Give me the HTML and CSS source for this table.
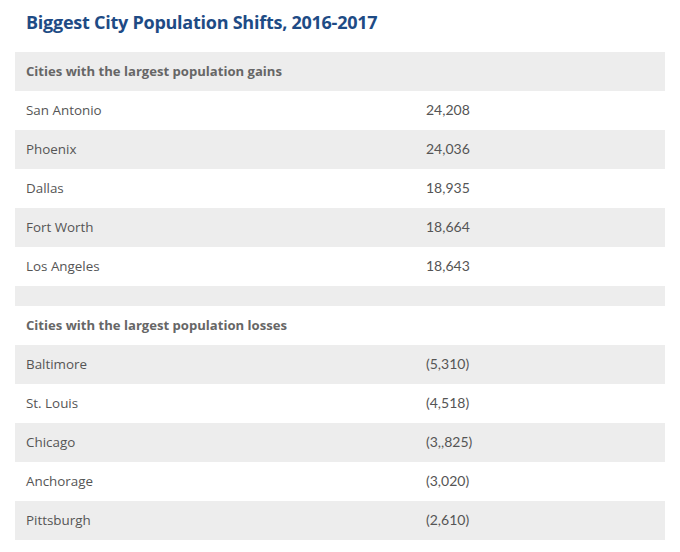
FILE: index.html
```html
<!DOCTYPE html>
<html>
<head>
<meta charset="utf-8">
<link rel="stylesheet" href="styles.css">
</head>
<body>
<div class="wrap">
  <h1 class="title">Biggest City Population Shifts, 2016-2017</h1>
  <table class="shifts">
    <tbody>
      <tr class="head"><td colspan="2">Cities with the largest population gains</td></tr>
      <tr><td class="city">San Antonio</td><td class="num">24,208</td></tr>
      <tr><td class="city">Phoenix</td><td class="num">24,036</td></tr>
      <tr><td class="city">Dallas</td><td class="num">18,935</td></tr>
      <tr><td class="city">Fort Worth</td><td class="num">18,664</td></tr>
      <tr><td class="city">Los Angeles</td><td class="num">18,643</td></tr>
      <tr class="spacer"><td colspan="2"></td></tr>
      <tr class="head"><td colspan="2">Cities with the largest population losses</td></tr>
      <tr><td class="city">Baltimore</td><td class="num">(5,310)</td></tr>
      <tr><td class="city">St. Louis</td><td class="num">(4,518)</td></tr>
      <tr><td class="city">Chicago</td><td class="num">(3,,825)</td></tr>
      <tr><td class="city">Anchorage</td><td class="num">(3,020)</td></tr>
      <tr><td class="city">Pittsburgh</td><td class="num">(2,610)</td></tr>
    </tbody>
  </table>
</div>
</body>
</html>
```
FILE: styles.css
```css
html, body {
  margin: 0;
  padding: 0;
  background: #ffffff;
}
.wrap {
  padding: 9px 15px 0 15px;
  font-family: "Open Sans", "Noto Sans", sans-serif;
}
.title {
  margin: 0 0 17px 11px;
  font-size: 18px;
  line-height: 26px;
  font-weight: 700;
  color: #1e4b85;
  letter-spacing: -0.25px;
}
.shifts {
  width: 650px;
  border-collapse: collapse;
  border-spacing: 0;
}
.shifts td {
  height: 39px;
  padding: 0 11px 1px 11px;
  box-sizing: border-box;
  font-size: 13.4px;
  color: #555555;
  vertical-align: middle;
}
.shifts tr:nth-child(odd) td {
  background: #ededed;
}
.shifts td.city {
  width: 400px;
}
.shifts td.num {
  font-family: "Lato", "Open Sans", sans-serif;
  font-size: 14px;
  padding-bottom: 2px;
}
.shifts tr.head td {
  font-weight: 700;
  color: #666666;
  font-size: 13.1px;
}
.shifts tr.spacer td {
  height: 20px;
}
```
